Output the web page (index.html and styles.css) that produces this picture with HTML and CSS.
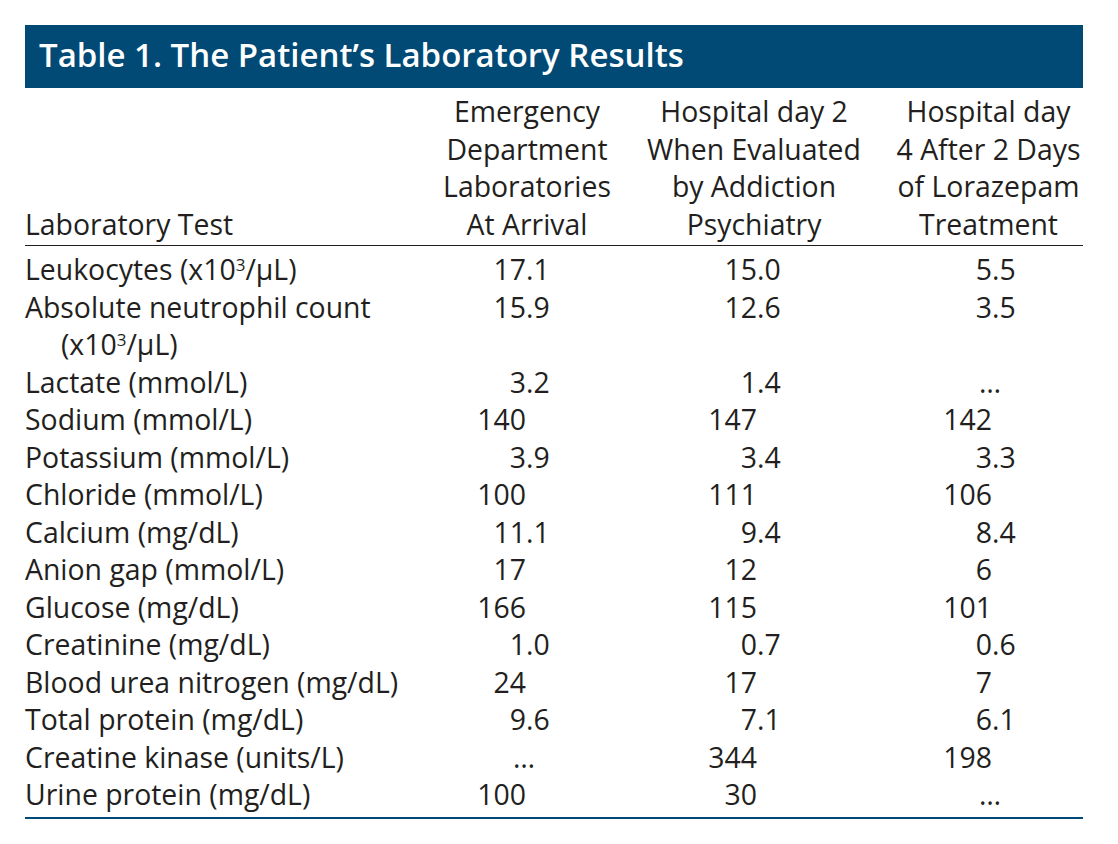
FILE: index.html
```html
<!DOCTYPE html>
<html lang="en">
<head>
<meta charset="utf-8">
<title>Table 1. The Patient’s Laboratory Results</title>
<link rel="stylesheet" href="styles.css">
</head>
<body>
<div class="page">
  <div class="title">Table 1. The Patient’s Laboratory Results</div>
  <table class="labs">
    <colgroup>
      <col class="c-test"><col class="c-ed"><col class="c-d2"><col class="c-d4">
    </colgroup>
    <thead>
      <tr>
        <th class="th-test">Laboratory Test</th>
        <th>Emergency<br>Department<br>Laboratories<br>At Arrival</th>
        <th>Hospital day 2<br>When Evaluated<br>by Addiction<br>Psychiatry</th>
        <th>Hospital day<br>4 After 2 Days<br>of Lorazepam<br>Treatment</th>
      </tr>
    </thead>
    <tbody>
      <tr><td class="test">Leukocytes (x10<sup>3</sup>/µL)</td><td class="v ed"><span class="i">17</span>.1</td><td class="v d2"><span class="i">15</span>.0</td><td class="v d4"><span class="i">5</span>.5</td></tr>
      <tr><td class="test">Absolute neutrophil count (x10<sup>3</sup>/µL)</td><td class="v ed"><span class="i">15</span>.9</td><td class="v d2"><span class="i">12</span>.6</td><td class="v d4"><span class="i">3</span>.5</td></tr>
      <tr><td class="test">Lactate (mmol/L)</td><td class="v ed"><span class="i">3</span>.2</td><td class="v d2"><span class="i">1</span>.4</td><td class="v d4"><span class="i"></span><span class="na">…</span></td></tr>
      <tr><td class="test">Sodium (mmol/L)</td><td class="v ed"><span class="i">140</span></td><td class="v d2"><span class="i">147</span></td><td class="v d4"><span class="i">142</span></td></tr>
      <tr><td class="test">Potassium (mmol/L)</td><td class="v ed"><span class="i">3</span>.9</td><td class="v d2"><span class="i">3</span>.4</td><td class="v d4"><span class="i">3</span>.3</td></tr>
      <tr><td class="test">Chloride (mmol/L)</td><td class="v ed"><span class="i">100</span></td><td class="v d2"><span class="i">111</span></td><td class="v d4"><span class="i">106</span></td></tr>
      <tr><td class="test">Calcium (mg/dL)</td><td class="v ed"><span class="i">11</span>.1</td><td class="v d2"><span class="i">9</span>.4</td><td class="v d4"><span class="i">8</span>.4</td></tr>
      <tr><td class="test">Anion gap (mmol/L)</td><td class="v ed"><span class="i">17</span></td><td class="v d2"><span class="i">12</span></td><td class="v d4"><span class="i">6</span></td></tr>
      <tr><td class="test">Glucose (mg/dL)</td><td class="v ed"><span class="i">166</span></td><td class="v d2"><span class="i">115</span></td><td class="v d4"><span class="i">101</span></td></tr>
      <tr><td class="test">Creatinine (mg/dL)</td><td class="v ed"><span class="i">1</span>.0</td><td class="v d2"><span class="i">0</span>.7</td><td class="v d4"><span class="i">0</span>.6</td></tr>
      <tr><td class="test">Blood urea nitrogen (mg/dL)</td><td class="v ed"><span class="i">24</span></td><td class="v d2"><span class="i">17</span></td><td class="v d4"><span class="i">7</span></td></tr>
      <tr><td class="test">Total protein (mg/dL)</td><td class="v ed"><span class="i">9</span>.6</td><td class="v d2"><span class="i">7</span>.1</td><td class="v d4"><span class="i">6</span>.1</td></tr>
      <tr><td class="test">Creatine kinase (units/L)</td><td class="v ed"><span class="i"></span><span class="na">…</span></td><td class="v d2"><span class="i">344</span></td><td class="v d4"><span class="i">198</span></td></tr>
      <tr><td class="test">Urine protein (mg/dL)</td><td class="v ed"><span class="i">100</span></td><td class="v d2"><span class="i">30</span></td><td class="v d4"><span class="i"></span><span class="na">…</span></td></tr>
    </tbody>
  </table>
</div>
</body>
</html>
```

FILE: styles.css
```css
html, body {
  margin: 0;
  padding: 0;
  background: #ffffff;
}

.page {
  padding: 25px 0 0 25px;
  width: 1058px;
  font-family: "Open Sans", "Noto Sans", "Liberation Sans", sans-serif;
  color: #231f20;
}

.title {
  background: #004a75;
  color: #ffffff;
  height: 63px;
  line-height: 60px;
  padding-left: 14px;
  font-size: 33px;
  font-weight: 600;
  letter-spacing: 0;
  white-space: nowrap;
}

.labs {
  width: 1058px;
  table-layout: fixed;
  border-collapse: collapse;
  font-size: 28.4px;
  line-height: 37.5px;
}

.c-test { width: 415px; }
.c-ed { width: 174px; }
.c-d2 { width: 280px; }
.c-d4 { width: 189px; }

.labs th {
  font-weight: 400;
  text-align: center;
  vertical-align: bottom;
  padding: 5px 0 2px;
  border-bottom: 1.5px solid #231f20;
  white-space: nowrap;
}

.labs th.th-test {
  text-align: left;
}

.labs td {
  padding: 0;
  vertical-align: top;
  white-space: nowrap;
}

.labs td.test {
  white-space: normal;
  padding-left: 36px;
  text-indent: -36px;
}

.labs tbody tr:first-child td {
  padding-top: 5px;
}

.labs tbody tr:last-child td {
  padding-bottom: 3px;
  border-bottom: 2.5px solid #004a75;
}

.labs sup {
  font-size: 17px;
  line-height: 0;
  vertical-align: 9px;
}

.v .i {
  display: inline-block;
  text-align: right;
}

.ed .i { width: 86px; }
.d2 .i { width: 143px; }
.d4 .i { width: 98px; }

.na {
  display: inline-block;
  margin-left: -13px;
}
```
